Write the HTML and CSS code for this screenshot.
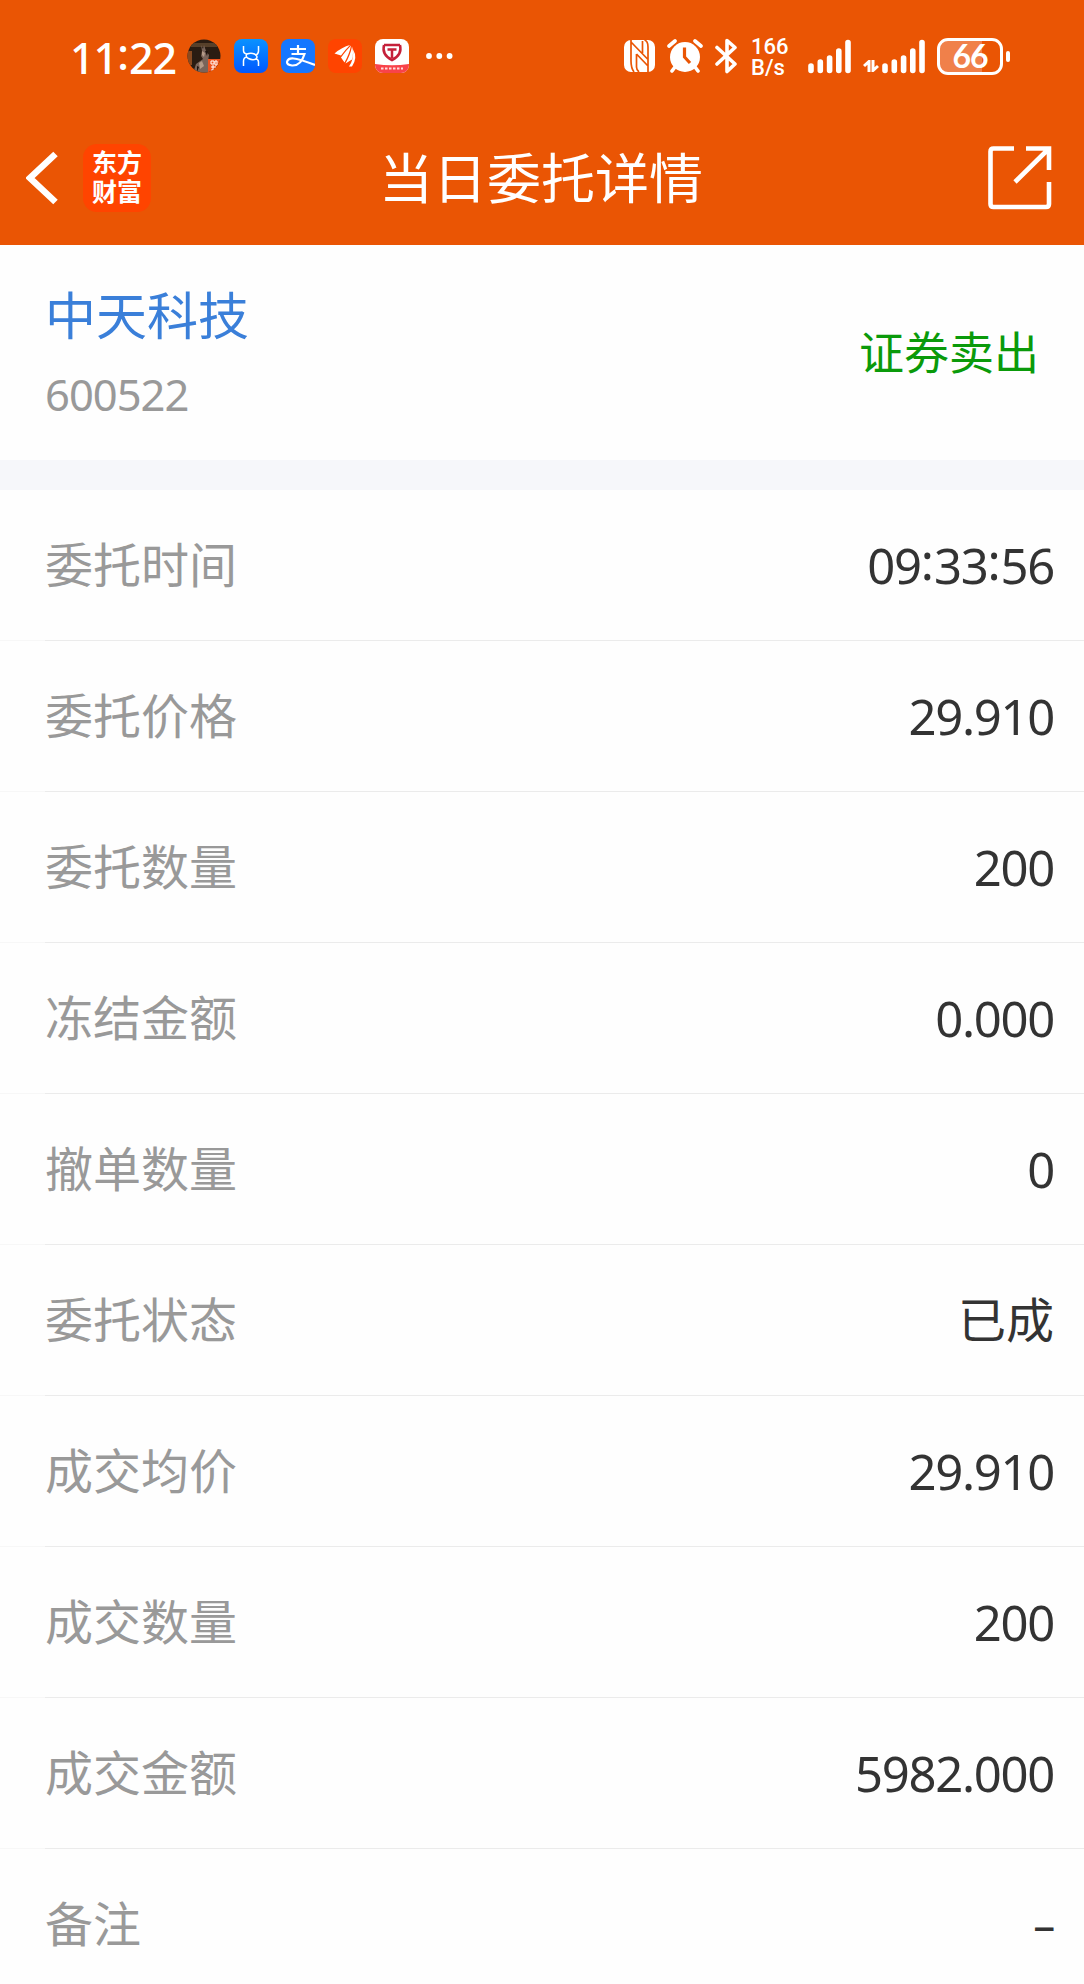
FILE: index.html
```html
<!DOCTYPE html>
<html lang="zh-CN">
<head>
    <meta charset="UTF-8">
    <meta name="viewport" content="width=device-width, initial-scale=1.0">
    <title>当日委托详情</title>
    <link rel="stylesheet" href="styles.css">
</head>
<body>
    <header class="header">
        <!-- Barra de estado -->
        <div class="status">
            <div class="status-left">
                <span class="clock">11<span class="colon">:</span>22</span>
                <svg class="app" viewBox="0 0 34 34">
                    <clipPath id="circle"><circle cx="17" cy="17" r="16.5"/></clipPath>
                    <g clip-path="url(#circle)">
                        <rect width="34" height="34" fill="#2a1c12"/>
                        <path d="M0 4h34v4H0z" fill="#57402a"/>
                        <path d="M0 12h5v14H0z" fill="#8a4a20"/>
                        <path d="M14 6l1 6-1 5 2 3-7 5-3 9h16l-1-12 1-6-3-4-2-6-1 4z" fill="#79645a"/>
                        <path d="M15 12l3 2-1 4-2-2zM12 24l3-2 2 5-4 3z" fill="#b49a88"/>
                        <path d="M18 12h3l-1 5zM10 27l2 1-2 5z" fill="#1d130e"/>
                        <rect x="21" y="20" width="13" height="14" fill="#f0521d"/>
                        <path d="M24 22h3v3h-3zM29 22h-1v4h2v-4zM24 28h5M24 31h5M26 26v6" fill="none" stroke="#fff" stroke-width="1"/>
                    </g>
                </svg>
                <svg class="app" viewBox="0 0 34 34">
                    <defs>
                        <linearGradient id="blue" x1="0" y1="0" x2="0" y2="1">
                            <stop offset="0" stop-color="#0a92ff"/>
                            <stop offset="1" stop-color="#0058ff"/>
                        </linearGradient>
                    </defs>
                    <rect width="34" height="34" rx="8" fill="url(#blue)"/>
                    <path d="M9.500 7v4.500q0 3 3.500 3.500 4-1.500 7.500 0 3.500 2 2 4.500-3 2.500-8 0-3-1.500-2-4M24.500 7v5q0 3-3 4.500M24.500 27v-4q0-2.500-3-3.500M9.500 27v-5q0-3.500 3.500-4" fill="none" stroke="#fff" stroke-width="1.500"/>
                </svg>
                <svg class="app" viewBox="0 0 34 34">
                    <rect width="34" height="34" rx="8" fill="#1677ff"/>
                    <path d="M9 10h16M17 6v9M10.500 15h13Q20 27 11 26.500q-5-.5-5-3.500 1-4 6.500-3.500Q18 20 34 26" fill="none" stroke="#fff" stroke-width="2.200"/>
                </svg>
                <svg class="app" viewBox="0 0 34 34">
                    <rect width="34" height="34" rx="8" fill="#ff4400"/>
                    <path d="M6.500 14.500Q14 8 22 6q-5 5-9 10.500zM13 18.500q5-7 10-12-1.500 8-6.500 17zM17.500 24.500q5-9 6.500-17 2 6 0 13zM21 27.500q5-7 4-17 5 8-1 17z" fill="#fff"/>
                </svg>
                <svg class="app" viewBox="0 0 34 34">
                    <clipPath id="tile"><rect width="34" height="34" rx="8"/></clipPath>
                    <g clip-path="url(#tile)">
                        <rect width="34" height="34" fill="#fff"/>
                        <path d="M0 25q17 2.500 34 0v9H0z" fill="#f8434a"/>
                    </g>
                    <path d="M9 6h16M9 6q-2.500 10 8 15Q27.500 16 25 6M12.500 10.500h9M17 10.500V19" fill="none" stroke="#c5203a" stroke-width="2.500"/>
                    <path d="M6 29.500h22" stroke="#ffdcdc" stroke-width="2" stroke-dasharray="2.500 1.500"/>
                </svg>
                <svg class="more" viewBox="0 0 28 8" fill="#fff">
                    <circle cx="4" cy="4" r="2.900"/>
                    <circle cx="14.300" cy="4" r="2.900"/>
                    <circle cx="24.600" cy="4" r="2.900"/>
                </svg>
            </div>

            <div class="status-right">
                <svg class="nfc" viewBox="0 0 31 34">
                    <rect y="1" width="31" height="32" rx="7" fill="#fff"/>
                    <path d="M7 1v21q0 7 3 11M7 3l17 17.500M12.500 15v13q0 3 2.500 5M12.500 15l11.500 12M20.500 1q3.500 1 3.500 7v25M18.500 2v12" fill="none" stroke="#ea5504" stroke-width="1.700"/>
                </svg>
                <svg class="alarm" viewBox="0 0 36 36">
                    <circle cx="18" cy="19" r="15" fill="#fff"/>
                    <path d="M2 8l6-5M34 8l-6-5M8 29l-3 4M28 29l3 4" stroke="#fff" stroke-width="3.600" stroke-linecap="round"/>
                    <path d="M17.500 9.500V19l5.500 6" fill="none" stroke="#ea5504" stroke-width="3.200"/>
                </svg>
                <svg class="bluetooth" viewBox="0 0 24 36">
                    <path d="M2 9.500L20 26 12 33.500V2.500L20 9.500 2 26" fill="none" stroke="#fff" stroke-width="3.600" stroke-linecap="round" stroke-linejoin="round"/>
                </svg>
                <span class="speed"><span>166</span><span>B/s</span></span>
                <svg class="signal" viewBox="0 0 44 35" stroke="#fff" stroke-width="5.600" stroke-linecap="round">
                    <path d="M3 27v4.500M12.300 23v8.500M21.600 19v12.500M30.800 12v19.500M40 3.500v28"/>
                </svg>
                <svg class="arrows" viewBox="0 0 16 12">
                    <path d="M6 12V1.500L1 6M10 0v10.500L15 6" fill="none" stroke="#fff" stroke-width="3"/>
                </svg>
                <svg class="signal" viewBox="0 0 44 35" stroke="#fff" stroke-width="5.600" stroke-linecap="round">
                    <path d="M3 27v4.500M12.300 23v8.500M21.600 19v12.500M30.800 12v19.500M40 3.500v28"/>
                </svg>
                <span class="battery">66</span>
                <span class="battery-tip"></span>
            </div>
        </div>

        <!-- Barra de navegación -->
        <div class="navbar">
            <div class="nav-left">
                <svg class="back" viewBox="0 0 32 56">
                    <path d="M29.500 4L4 28l25.500 24" fill="none" stroke="#fff" stroke-width="6.500"/>
                </svg>
                <span class="logo"><span>东方</span><span>财富</span></span>
            </div>
            <h1 class="title">当日委托详情</h1>
            <svg class="share" viewBox="0 0 64 64">
                <path d="M26 2.500H5.500q-3 0-3 3V58q0 3 3 3H58q3 0 3-3V36M38 2.500h23V24M60 3.500L27 36" fill="none" stroke="#fff" stroke-width="4.600"/>
            </svg>
        </div>
    </header>

    <section class="stock">
        <div>
            <div class="stock-name">中天科技</div>
            <div class="stock-code">600522</div>
        </div>
        <div class="direction">证券卖出</div>
    </section>

    <main class="list">
        <div class="row"><span class="label">委托时间</span><span class="value">09<span class="colon">:</span>33<span class="colon">:</span>56</span></div>
        <div class="row"><span class="label">委托价格</span><span class="value">29.910</span></div>
        <div class="row"><span class="label">委托数量</span><span class="value">200</span></div>
        <div class="row"><span class="label">冻结金额</span><span class="value">0.000</span></div>
        <div class="row"><span class="label">撤单数量</span><span class="value">0</span></div>
        <div class="row"><span class="label">委托状态</span><span class="value text">已成</span></div>
        <div class="row"><span class="label">成交均价</span><span class="value">29.910</span></div>
        <div class="row"><span class="label">成交数量</span><span class="value">200</span></div>
        <div class="row"><span class="label">成交金额</span><span class="value">5982.000</span></div>
        <div class="row"><span class="label">备注</span><span class="value dash">–</span></div>
    </main>
</body>
</html>
```
FILE: styles.css
```css
* {
    box-sizing: border-box;
}

body {
    margin: 0;
    height: 1984px;
    overflow: hidden;
    background-color: #fefefe;
    color: #333;
    font-family: "Noto Sans CJK SC", sans-serif;
}

svg {
    display: block;
    flex: none;
}

.header {
    height: 245px;
    background-color: #ea5504;
    color: #fff;
}

/* Barra de estado */
.status {
    height: 112px;
    padding: 0 74px 0 70px;
    display: flex;
    justify-content: space-between;
    align-items: center;
}

.status-left,
.status-right {
    display: flex;
    align-items: center;
}

.clock {
    width: 117px;
    padding-top: 3px;
    font-family: "Noto Sans", sans-serif;
    font-size: 43px;
    font-weight: 500;
    line-height: 56px;
    letter-spacing: -1px;
    white-space: nowrap;
}

.colon {
    position: relative;
    top: -4px;
    letter-spacing: 0;
}

.app {
    width: 34px;
    height: 34px;
    margin-right: 13px;
}

.more {
    width: 28px;
    height: 8px;
    margin-left: 3px;
}

.nfc {
    width: 31px;
    height: 34px;
    margin-right: 12px;
}

.alarm {
    width: 36px;
    height: 36px;
    margin-right: 12px;
}

.bluetooth {
    width: 24px;
    height: 36px;
    margin-right: 12px;
}

.speed {
    width: 57px;
    padding-top: 2px;
    font-family: Roboto, sans-serif;
    font-size: 22px;
    font-weight: 500;
    line-height: 21px;
}

.speed span,
.logo span {
    display: block;
}

.signal {
    width: 44px;
    height: 35px;
}

.arrows {
    width: 16px;
    height: 12px;
    margin: 20px 3px 0 11px;
}

.battery {
    width: 66px;
    height: 37px;
    margin-left: 11px;
    border: 3px solid #fff;
    border-radius: 11px;
    background: linear-gradient(to right, #f0804a 70%, transparent 70%);
    font-family: Lato, sans-serif;
    font-size: 32px;
    font-weight: bold;
    line-height: 29px;
    letter-spacing: -1px;
    text-align: center;
}

.battery-tip {
    width: 4px;
    height: 11px;
    margin-left: 3px;
    border-radius: 2px;
    background-color: #fff;
}

/* Barra de navegación */
.navbar {
    height: 131px;
    padding: 0 32px 0 26px;
    display: grid;
    grid-template-columns: 1fr auto 1fr;
    align-items: center;
}

.nav-left {
    display: flex;
    align-items: center;
}

.back {
    width: 32px;
    height: 56px;
    margin-right: 25px;
}

.logo {
    width: 68px;
    height: 68px;
    padding-top: 3px;
    border-radius: 14px;
    background-color: #ff4400;
    font-size: 25px;
    font-weight: bold;
    line-height: 29px;
    text-align: center;
}

.title {
    margin: 0 -4px 4px 0;
    font-size: 54px;
    font-weight: 400;
    line-height: 80px;
}

.share {
    width: 64px;
    height: 64px;
    justify-self: end;
}

/* Datos de la acción */
.stock {
    height: 245px;
    padding: 0 45px;
    border-bottom: 30px solid #f6f7fa;
    display: flex;
    justify-content: space-between;
    align-items: center;
}

.stock-name {
    color: #3a7fd9;
    font-size: 51px;
    line-height: 80px;
}

.stock-code {
    padding-top: 3px;
    color: #999;
    font-family: "Noto Sans", sans-serif;
    font-size: 43.5px;
    line-height: 77px;
    letter-spacing: -1px;
}

.direction {
    margin-bottom: 4px;
    color: #0a9a0a;
    font-size: 45px;
    line-height: 60px;
}

/* Lista de detalles */
.row {
    height: 151px;
    padding: 0 30px 8px 45px;
    background: linear-gradient(to right, #f7f7f7 45px, #ebebeb 45px) bottom / 100% 1px no-repeat;
    display: flex;
    justify-content: space-between;
    align-items: center;
}

.label {
    color: #999;
    font-size: 48px;
    line-height: 70px;
}

.value {
    padding-top: 6px;
    font-family: "Noto Sans", sans-serif;
    font-size: 49px;
    line-height: 70px;
    letter-spacing: -1.3px;
}

.value.text {
    padding-top: 0;
    font-family: "Noto Sans CJK SC", sans-serif;
    font-size: 48px;
    letter-spacing: 0;
}

.value.dash {
    font-size: 44px;
}
```
